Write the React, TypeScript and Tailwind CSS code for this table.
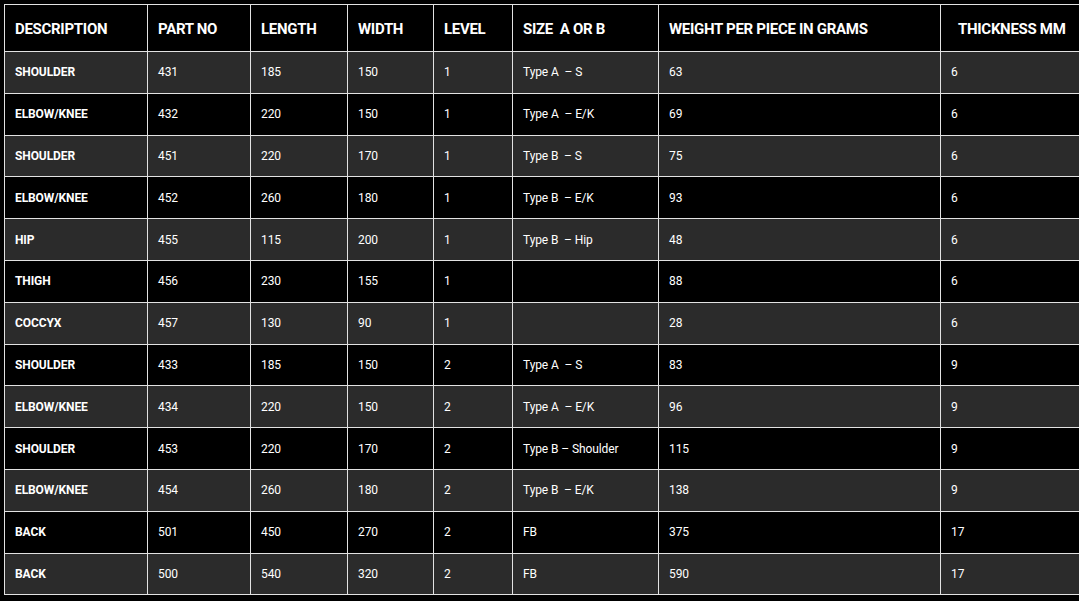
const headers = [
  "DESCRIPTION",
  "PART NO",
  "LENGTH",
  "WIDTH",
  "LEVEL",
  "SIZE  A OR B",
  "WEIGHT PER PIECE IN GRAMS",
  "THICKNESS MM",
];

const colWidths = [143, 103, 97, 86, 79, 146, 282, 150];

const rows: string[][] = [
  ["SHOULDER", "431", "185", "150", "1", "Type A  – S", "63", "6"],
  ["ELBOW/KNEE", "432", "220", "150", "1", "Type A  – E/K", "69", "6"],
  ["SHOULDER", "451", "220", "170", "1", "Type B  – S", "75", "6"],
  ["ELBOW/KNEE", "452", "260", "180", "1", "Type B  – E/K", "93", "6"],
  ["HIP", "455", "115", "200", "1", "Type B  – Hip", "48", "6"],
  ["THIGH", "456", "230", "155", "1", "", "88", "6"],
  ["COCCYX", "457", "130", "90", "1", "", "28", "6"],
  ["SHOULDER", "433", "185", "150", "2", "Type A  – S", "83", "9"],
  ["ELBOW/KNEE", "434", "220", "150", "2", "Type A  – E/K", "96", "9"],
  ["SHOULDER", "453", "220", "170", "2", "Type B – Shoulder", "115", "9"],
  ["ELBOW/KNEE", "454", "260", "180", "2", "Type B  – E/K", "138", "9"],
  ["BACK", "501", "450", "270", "2", "FB", "375", "17"],
  ["BACK", "500", "540", "320", "2", "FB", "590", "17"],
];

export default function App() {
  return (
    <div className="h-screen w-screen overflow-hidden bg-black pl-1 pt-1 font-['Roboto','Liberation_Sans',sans-serif] text-white">
      <table className="table-fixed border-collapse" style={{ width: 1086 }}>
        <colgroup>
          {colWidths.map((w, i) => (
            <col key={i} style={{ width: w }} />
          ))}
        </colgroup>
        <thead>
          <tr className="h-[47px] bg-black">
            {headers.map((h, i) => (
              <th
                key={h}
                className={
                  "whitespace-pre border border-[#e2e2e2] pt-[3px] text-left text-[15px] font-bold tracking-[-0.3px] " +
                  (i === 7 ? "pl-[17px]" : "pl-[10px]")
                }
              >
                {h}
              </th>
            ))}
          </tr>
        </thead>
        <tbody>
          {rows.map((row, r) => (
            <tr
              key={r}
              className={"h-[41.8px] " + (r % 2 === 0 ? "bg-[#2b2b2b]" : "bg-black")}
            >
              {row.map((cell, c) => (
                <td
                  key={c}
                  className={
                    "whitespace-pre border border-[#e2e2e2] pl-[10px] text-[12px] tracking-[-0.1px] " +
                    (c === 0 ? "font-bold" : "font-normal")
                  }
                >
                  {cell}
                </td>
              ))}
            </tr>
          ))}
        </tbody>
      </table>
    </div>
  );
}
